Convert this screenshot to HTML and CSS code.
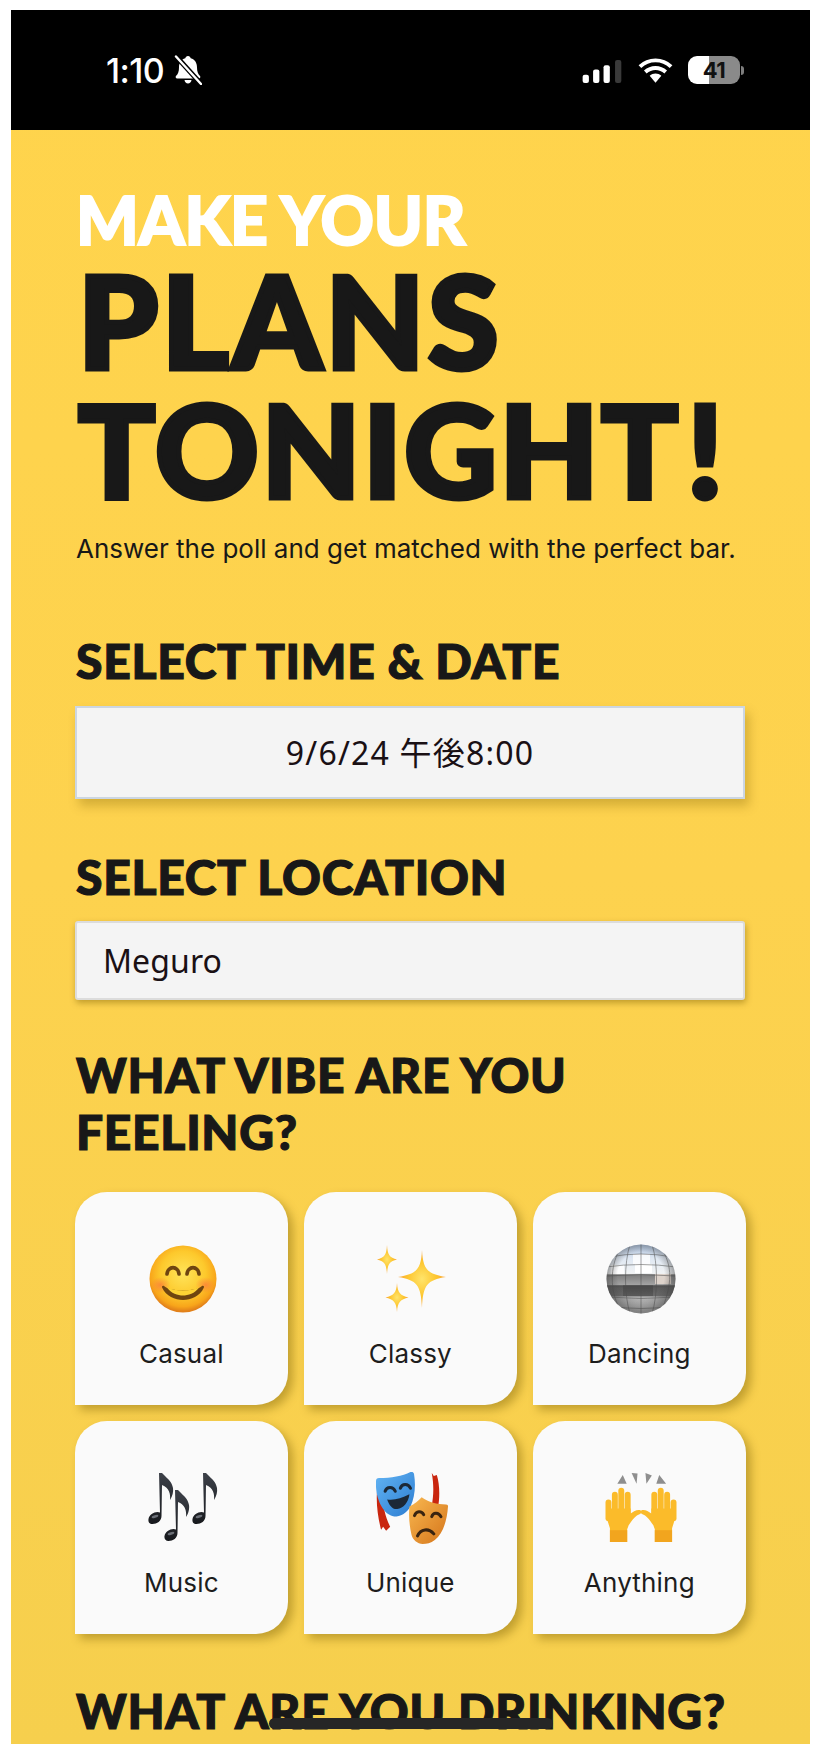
FILE: index.html
```html
<!DOCTYPE html>
<html lang="en">
<head>
<meta charset="utf-8">
<title>Make your plans tonight</title>
<link rel="stylesheet" href="styles.css">
</head>
<body>
<div class="phone">
  <header class="status">
    <div class="status-left">
      <span class="time">1:10</span>
      <svg class="bell" viewBox="0 0 28 30"><path fill="#fff" d="M14 1c1.500 0 2.500 1 2.700 2.300C21 4.500 23 8 23 12.500c0 4 1 6.500 3 8.500.8.900.300 2.500-1.200 2.500H3.200C1.700 23.500 1.200 21.900 2 21c2-2 3-4.500 3-8.500C5 8 7 4.500 11.300 3.300 11.500 2 12.500 1 14 1zM10.500 25h7c-.3 2-1.700 3.500-3.500 3.500s-3.200-1.500-3.500-3.500z"/><path stroke="#000" stroke-width="5" d="M1 0l27 30"/><path stroke="#fff" stroke-width="2.400" stroke-linecap="round" d="M2 1.500l25 27.500"/></svg>
    </div>
    <div class="status-right">
      <svg class="signal" viewBox="0 0 38 22"><rect x="0" y="14" width="6" height="8" rx="2" fill="#fff"/><rect x="10" y="9" width="6" height="13" rx="2" fill="#fff"/><rect x="20" y="5" width="6" height="17" rx="2" fill="#fff"/><rect x="31" y="0" width="6" height="22" rx="2" fill="#3a3a3a"/></svg>
      <svg class="wifi" viewBox="0 0 36 26"><path fill="none" stroke="#fff" stroke-width="4" d="M2 9.500C11 1 25 1 34 9.500M7.500 15c6-5.500 15-5.500 21 0"/><path fill="#fff" d="M12 18.800c3.500-3 8.500-3 12 0L18 26z"/></svg>
      <div class="battery"><span class="battery-num">41</span></div>
      <span class="battery-nub"></span>
    </div>
  </header>

  <main class="content">
    <section class="hero">
      <p class="kicker">MAKE YOUR</p>
      <h1 class="title"><span class="t-plans">PLANS</span><br><span class="t-tonight">TONIGHT</span><span class="t-bang">!</span></h1>
      <p class="sub">Answer the poll and get matched with the perfect bar.</p>
    </section>

    <h2 class="heading first">SELECT TIME &amp; DATE</h2>
    <div class="field field-date">9/6/24 午後8:00</div>

    <h2 class="heading">SELECT LOCATION</h2>
    <div class="field field-loc">Meguro</div>

    <h2 class="heading heading-vibe">WHAT VIBE ARE YOU FEELING?</h2>
    <div class="cards">
      <div class="card">
        <svg class="emoji" viewBox="0 0 72 72">
          <defs>
            <radialGradient id="face" cx="50%" cy="42%" r="56%"><stop offset="0" stop-color="#ffe45a"/><stop offset=".6" stop-color="#fdc92c"/><stop offset=".88" stop-color="#f8a51a"/><stop offset="1" stop-color="#e2811a"/></radialGradient>
            <radialGradient id="blush"><stop offset="0" stop-color="#fb7a3c" stop-opacity=".75"/><stop offset="1" stop-color="#fb7a3c" stop-opacity="0"/></radialGradient>
          </defs>
          <circle cx="36" cy="36" r="33.500" fill="url(#face)"/>
          <ellipse cx="13.500" cy="42" rx="10" ry="8" fill="url(#blush)"/>
          <ellipse cx="58.500" cy="42" rx="10" ry="8" fill="url(#blush)"/>
          <path fill="none" stroke="#6f4510" stroke-width="3.600" stroke-linecap="round" d="M20 31c1-8.500 11-8.500 12 0M40 31c1-8.500 11-8.500 12 0"/>
          <path fill="#6f4510" d="M17 43c6 6 32 6 38 0 1.200-1 2.500.2 1.800 1.700C53 53 44 57 36 57s-17-4-20.800-12.300C14.500 43.200 15.800 42 17 43z"/>
          <path fill="#fdd335" d="M20 44.600c8 3.800 24 3.800 32 0-4 6-11 8-16 8s-12-2-16-8z"/>
        </svg>
        <span class="label">Casual</span>
      </div>
      <div class="card">
        <svg class="emoji" viewBox="0 0 72 72">
          <defs><radialGradient id="spark"><stop offset="0" stop-color="#ffe46a"/><stop offset=".6" stop-color="#fdc52e"/><stop offset="1" stop-color="#f9a23a"/></radialGradient></defs>
          <path fill="url(#spark)" d="M46 2c1 19 5 24 24 27-19 3-23 8-24 31-1-23-5-28-24-31 19-3 23-8 24-27z" transform="translate(0 5)"/>
          <path fill="url(#spark)" d="M11 2c.6 10 2.500 12.500 10 14.500C13.500 18.500 11.600 21 11 31c-.6-10-2.500-12.500-10-14.500C8.500 14.500 10.400 12 11 2z"/>
          <path fill="url(#spark)" d="M21 39c.6 10 3.500 12.500 11.500 14.500C24.500 55.500 21.600 58 21 68c-.6-10-3.500-12.500-11.500-14.500C17.500 51.500 20.400 49 21 39z" transform="translate(0 1)"/>
        </svg>
        <span class="label">Classy</span>
      </div>
      <div class="card">
        <svg class="emoji" viewBox="0 0 72 72">
          <defs>
            <linearGradient id="ball" x1="0" y1="0" x2="0" y2="1"><stop offset="0" stop-color="#a9bdd8"/><stop offset=".2" stop-color="#dfe8f3"/><stop offset=".42" stop-color="#f1f3f4"/><stop offset=".44" stop-color="#7e7e7e"/><stop offset=".58" stop-color="#a2a2a2"/><stop offset=".6" stop-color="#555"/><stop offset=".74" stop-color="#6c6c6c"/><stop offset=".76" stop-color="#aeaeae"/><stop offset="1" stop-color="#cfcfcf"/></linearGradient>
            <radialGradient id="ballshade" cx="50%" cy="45%" r="52%"><stop offset=".65" stop-color="#444" stop-opacity="0"/><stop offset="1" stop-color="#444" stop-opacity=".55"/></radialGradient>
            <clipPath id="ballclip"><circle cx="36" cy="36" r="34.500"/></clipPath>
          </defs>
          <circle cx="36" cy="36" r="34.500" fill="url(#ball)"/>
          <g clip-path="url(#ballclip)">
            <rect x="6" y="22" width="13" height="9" fill="#fff" opacity=".85"/>
            <rect x="28" y="11" width="17" height="10" fill="#fff" opacity=".8"/>
            <rect x="30" y="21" width="17" height="9" fill="#fff"/>
            <rect x="50" y="31" width="16" height="10" fill="#ddd3cb"/>
            <rect x="18" y="42" width="30" height="11" fill="#2f2f2f" opacity=".3"/>
            <g fill="none" stroke="#4d4d4d" stroke-width=".7" opacity=".75">
              <path d="M4 14q32-6 64 0M1 24q35-5 70 0M1 33q35-3 70 0M1 43h70M1 54q35 3 70 0M5 63q31 5 62 0"/>
              <path d="M36 1v70M25 1.500C19 20 19 52 25 70.500M47 1.500C53 20 53 52 47 70.500M14 8C5 24 5 48 14 64M58 8c9 16 9 32 0 56"/>
            </g>
          </g>
          <circle cx="36" cy="36" r="34.500" fill="url(#ballshade)"/>
        </svg>
        <span class="label">Dancing</span>
      </div>
      <div class="card">
        <svg class="emoji" viewBox="0 0 72 72">
          <defs><linearGradient id="note" x1="0" y1="0" x2="0" y2="1"><stop offset="0" stop-color="#3d4149"/><stop offset="1" stop-color="#17191d"/></linearGradient></defs>
          <g fill="url(#note)">
            <path d="M9 1h3l2 2c4 4 8 7 9 13 .6 4-.5 8-3 12 .6-6-.5-12-8-15l-.5 31c0 5-4.500 8-9 8-3 0-4.500-2-4-5 .6-4 5-7 9-7 1 0 2 .2 2.500.5z" transform="translate(3 0)"/>
            <path d="M9 1h3l2 2c4 4 8 7 9 13 .6 4-.5 8-3 12 .6-6-.5-12-8-15l-.5 31c0 5-4.500 8-9 8-3 0-4.500-2-4-5 .6-4 5-7 9-7 1 0 2 .2 2.500.5z" transform="translate(19 17)"/>
            <path d="M9 1h3l2 2c4 4 8 7 9 13 .6 4-.5 8-3 12 .6-6-.5-12-8-15l-.5 31c0 5-4.500 8-9 8-3 0-4.500-2-4-5 .6-4 5-7 9-7 1 0 2 .2 2.500.5z" transform="translate(47 0)"/>
          </g>
          <g fill="#8d929b" opacity=".7">
            <ellipse cx="8" cy="44.500" rx="3.500" ry="1.300" transform="rotate(-18 8 44.500)"/>
            <ellipse cx="24" cy="61.500" rx="3.500" ry="1.300" transform="rotate(-18 24 61.500)"/>
            <ellipse cx="52" cy="44.500" rx="3.500" ry="1.300" transform="rotate(-18 52 44.500)"/>
          </g>
        </svg>
        <span class="label">Music</span>
      </div>
      <div class="card">
        <svg class="emoji" viewBox="0 0 71 71">
          <defs>
            <linearGradient id="blue" x1="0" y1="0" x2="1" y2="1"><stop offset="0" stop-color="#62b4f4"/><stop offset="1" stop-color="#2c7cd0"/></linearGradient>
            <linearGradient id="orange" x1="0" y1="0" x2="1" y2="1"><stop offset="0" stop-color="#f9b850"/><stop offset="1" stop-color="#d4741a"/></linearGradient>
          </defs>
          <path fill="#c9260f" d="M55 1l2 3 3-1c3 10 3 22 1 33l-6-3c2-10 2-21 0-32zM1 19l5 3c1 12 3 22 8 32l-4 4-3-4-2 3C2 45 0 32 1 19z"/>
          <path fill="url(#blue)" d="M0 9c0-2 1-3 3-3 12 0 23-2 31-6 2-.5 3 .5 3.500 2 2 12 .5 24-3.500 32-4 7-10 10-16 10C6 42-1 24 0 9z"/>
          <g fill="none" stroke="#1c2836" stroke-width="3" stroke-linecap="round"><path d="M9 19c1.500-5 8-5 10 0M24 16c1.500-5 8-5 10 0"/></g>
          <path fill="#1c2836" d="M11 27c7 1 14-1 22-5-1 8-6 14-12 14.500-5 .5-8-4-10-9.500z"/>
          <path fill="url(#orange)" d="M33 34c5-2 9-6 12-9 7 5 15 7 24 7 2 0 2 1 2 2-1 14-5 27-13 33-4 3-8 4-12 4-5 0-10-4-11-9-2-9-3-18-2-28z"/>
          <g fill="none" stroke="#3a2410" stroke-width="3" stroke-linecap="round"><path d="M38 43c1.500-5 7-5 9-1M55 44c1.500-5 7-4 9 0M41 63c3-7 11-8 16-2"/></g>
        </svg>
        <span class="label">Unique</span>
      </div>
      <div class="card">
        <svg class="emoji" viewBox="0 0 73 71">
          <defs>
            <g id="palm" fill="#fbbb2a">
              <rect x=".5" y="27" width="6" height="22" rx="3"/>
              <rect x="7" y="19" width="6" height="28" rx="3"/>
              <rect x="13.500" y="15" width="6" height="30" rx="3"/>
              <rect x="20" y="19" width="6" height="28" rx="3"/>
              <path d="M1 36H26V41C29 39 32 37 35 37.500 37.500 38 37.500 40.500 35.500 41.500 31 43 28 47 24 53L22.500 57V70H5V56C3 50 1 44 1 36z"/>
              <path fill="#f2a51e" d="M5 58h17.500V70H5z"/>
            </g>
          </defs>
          <g fill="#8e8e8e"><path d="M18 2l4 9-9.500 0zM27 0l6 .5-1 10.500zM41 0l6.500 2.500-5.500 8.500zM55 2l7 9-10 0z"/></g>
          <use href="#palm"/>
          <use href="#palm" transform="matrix(-1 0 0 1 73 0)"/>
        </svg>
        <span class="label">Anything</span>
      </div>
    </div>

    <h2 class="heading heading-drink">WHAT ARE YOU DRINKING?</h2>
  </main>

  <div class="home-bar"></div>
</div>
</body>
</html>
```
FILE: styles.css
```css
* { box-sizing: border-box; }
html, body { margin: 0; padding: 0; background: #fff; overflow: hidden; }
body { width: 820px; height: 1754px; padding: 10px 10px 10px 11px; }
.phone {
  position: relative;
  width: 799px;
  height: 1734px;
  overflow: hidden;
  background: linear-gradient(180deg, #ffd44c 0%, #fdd24e 50%, #f6cf4d 100%);
  font-family: "Inter", "Liberation Sans", sans-serif;
  color: #181818;
}
.status {
  height: 120px;
  background: #000;
  display: flex;
  justify-content: space-between;
  align-items: center;
  padding: 0 66px 0 95px;
  color: #fff;
}
.status-left { display: flex; align-items: center; gap: 10px; }
.time { font-size: 34px; font-weight: 500; letter-spacing: -.6px; }
.bell { width: 28px; height: 30px; }
.status-right { display: flex; align-items: center; }
.signal { width: 41px; height: 23px; margin-top: 3px; }
.wifi { width: 35px; height: 26px; margin-left: 15px; margin-top: -1px; }
.battery {
  width: 52px;
  height: 28px;
  margin-left: 15px;
  border-radius: 9px;
  background: linear-gradient(90deg, #fff 0 40%, #8a8a8a 40% 100%);
  display: flex;
  align-items: center;
  justify-content: center;
}
.battery-num { color: #111; font-size: 22px; font-weight: 700; letter-spacing: -.5px; }
.battery-nub { width: 3px; height: 9px; margin-left: 1px; background: #7d7d7d; border-radius: 0 3px 3px 0; }

.content { padding: 0 65px; }
.hero { padding-top: 60px; }
.kicker, .title, .heading { font-family: "Lato", "Inter", sans-serif; font-weight: 900; }
.kicker { margin: 0; font-size: 66px; line-height: 60px; color: #fff; letter-spacing: -.3px; -webkit-text-stroke: 2px #fff; }
.title { margin: 5px 0 0 2px; font-size: 128px; line-height: 129px; color: #181818; -webkit-text-stroke: 5px #181818; }
.t-plans { letter-spacing: 3.500px; }
.t-tonight { letter-spacing: 2.500px; }
.t-bang { margin-left: 6px; }
.sub { margin: 19px 0 0; font-size: 26px; line-height: 34px; color: #181818; }

.heading { margin: 0; font-size: 48px; line-height: 57px; color: #181818; letter-spacing: .7px; -webkit-text-stroke: 1.200px #181818; }
.first { margin-top: 66px; }
.field {
  margin-top: 17px;
  margin-left: -1px;
  background: #f4f4f4;
  font-family: "Noto Sans", "Noto Sans CJK JP", sans-serif;
  font-size: 32px;
  letter-spacing: 1.200px;
  color: #1a1014;
}
.field-date {
  height: 93px;
  margin-bottom: 49px;
  padding-bottom: 4px;
  border: 2px solid #ccd6e2;
  display: flex;
  align-items: center;
  justify-content: center;
  box-shadow: 4px 7px 10px rgba(120, 90, 0, .3);
}
.field-loc {
  height: 79px;
  margin-top: 16px;
  border: 2px solid #dcdcdc;
  border-radius: 3px;
  padding-left: 26px;
  display: flex;
  align-items: center;
  letter-spacing: .1px;
  box-shadow: 1px 3px 6px rgba(120, 90, 0, .45);
}
.heading-vibe { margin-top: 46px; }
.cards {
  margin: 32px 0 0 -1px;
  display: grid;
  grid-template-columns: repeat(3, 212.700px);
  column-gap: 16.300px;
  row-gap: 16px;
}
.card {
  height: 213px;
  background: #fafafa;
  border-radius: 32px 32px 32px 0;
  box-shadow: 5px 5px 10px rgba(110, 85, 0, .4);
  display: flex;
  flex-direction: column;
  align-items: center;
  padding-top: 51px;
}
.emoji { width: 72px; height: 72px; display: block; margin-left: 3px; }
.label { margin-top: 22px; font-size: 26px; line-height: 34px; letter-spacing: .2px; color: #1d1d1d; }
.heading-drink { margin-top: 48px; white-space: nowrap; }

.home-bar {
  position: absolute;
  left: 258px;
  top: 1708px;
  width: 284px;
  height: 11px;
  border-radius: 6px;
  background: #262626;
}
```
